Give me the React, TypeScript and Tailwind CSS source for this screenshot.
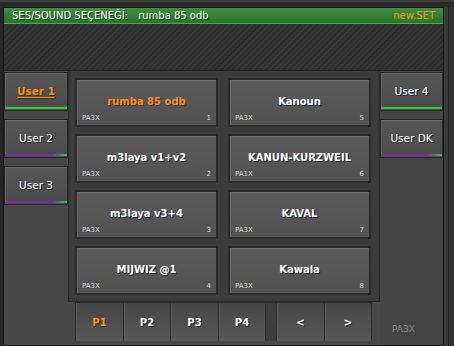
import React from "react";

const cards = [
  { name: "rumba 85 odb", tag: "PA3X", n: 1, active: true },
  { name: "m3laya v1+v2", tag: "PA3X", n: 2 },
  { name: "m3laya v3+4", tag: "PA3X", n: 3 },
  { name: "MIJWIZ @1", tag: "PA3X", n: 4 },
  { name: "Kanoun", tag: "PA3X", n: 5 },
  { name: "KANUN-KURZWEIL", tag: "PA1X", n: 6 },
  { name: "KAVAL", tag: "PA3X", n: 7 },
  { name: "Kawala", tag: "PA3X", n: 8 },
];

function UserBtn({ label, active, green }: { label: string; active?: boolean; green?: boolean }) {
  return (
    <div className="relative h-[39px] flex items-center justify-center border border-[#262626] bg-[linear-gradient(to_bottom,#575757,#4a4a4a)] shadow-[inset_1px_1px_0_#666]">
      <span
        className={
          active
            ? "text-[10.5px] font-bold text-[#f7941d] underline underline-offset-2 [text-shadow:1px_1px_0_#3a2a10]"
            : "text-[10.5px] text-white [text-shadow:1px_1px_0_#1c2436]"
        }
      >
        {label}
      </span>
      <div
        className={
          green
            ? "absolute left-0 right-0 bottom-[1px] h-[2px] bg-[#2fd02f]"
            : "absolute left-0 right-0 bottom-[1px] h-[2px] bg-[linear-gradient(to_right,#7a2ea8,#7a2ea8_75%,#2fd02f)]"
        }
      />
    </div>
  );
}

function Tab({ label, active, w }: { label: string; active?: boolean; w: string }) {
  return (
    <div
      className={`${w} h-full flex items-center justify-center border-r border-[#2c2c2c] bg-[linear-gradient(to_bottom,#474747,#565656)] shadow-[inset_1px_0_0_#5e5e5e]`}
    >
      <span
        className={
          active
            ? "text-[10px] font-bold text-[#f7941d] [text-shadow:1px_1px_0_#2a2a40]"
            : "text-[10px] font-bold text-white [text-shadow:1px_1px_0_#1c2436]"
        }
      >
        {label}
      </span>
    </div>
  );
}

export default function App() {
  return (
    <div className="w-[454px] h-[346px] bg-[#2d2d2d] overflow-hidden flex flex-col font-['DejaVu_Sans',sans-serif]">
      <div className="h-[7px] bg-[#2a2a2a] border-t-[2px] border-[#3c3c3c]" />
      <div className="flex flex-1">
        <div className="w-[3px] bg-[#262626]" />
        <div className="w-[441px] h-[339px] border border-[#161616] flex flex-col bg-[#474747]">
          {/* header */}
          <div className="h-[16px] flex items-center px-[8px] bg-[linear-gradient(to_bottom,#3f8e3f,#2b742b)] border-b border-[#46b046] text-[10px] text-white">
            <span className="[text-shadow:1px_1px_0_#1a3a1a]">SES/SOUND SEÇENEĞİ:</span>
            <span className="ml-[10px] [text-shadow:1px_1px_0_#1a3a1a]">rumba 85 odb</span>
            <span className="ml-auto text-[#f7941d]">new.SET</span>
          </div>
          {/* hatch */}
          <div className="h-[47px] bg-[repeating-linear-gradient(-45deg,#2d2d2d_0px,#2d2d2d_2px,#363636_2px,#363636_4px)] border-b border-[#222]" />
          {/* body */}
          <div className="flex flex-1">
            {/* left col */}
            <div className="w-[64px] flex flex-col gap-[8px] pt-[1px] bg-[#474747]">
              <UserBtn label="User 1" active green />
              <UserBtn label="User 2" />
              <UserBtn label="User 3" />
            </div>
            {/* center */}
            <div className="w-[312px] flex flex-col">
              <div className="h-[231px] bg-[#3c3c3c] border-l border-r border-b border-[#2a2a2a] pl-[6px] pt-[7px]">
                <div className="grid grid-cols-[143px_143px] grid-rows-[49px_49px_49px_49px] grid-flow-col gap-x-[10px] gap-y-[7px]">
                  {cards.map((c) => (
                    <div
                      key={c.n}
                      className="relative border-2 border-[#2b2b2b] bg-[linear-gradient(to_bottom,#5c5c5c,#515151)] shadow-[inset_1px_1px_0_#6a6a6a] flex flex-col"
                    >
                      <div className="flex-1 flex items-center justify-center pt-[9px]">
                        <span
                          className={
                            c.active
                              ? "text-[10px] font-bold text-[#f7941d] [text-shadow:1px_1px_0_#3a3040]"
                              : "text-[10px] font-bold text-white [text-shadow:1px_1px_0_#1c2436]"
                          }
                        >
                          {c.name}
                        </span>
                      </div>
                      <div className="h-[12px] flex items-start justify-between px-[5px] text-[7px] text-[#dcdcdc]">
                        <span>{c.tag}</span>
                        <span>{c.n}</span>
                      </div>
                    </div>
                  ))}
                </div>
              </div>
              <div className="flex-1 flex pl-[7px] bg-[#474747]">
                <div className="flex h-[39px] border-l border-[#2c2c2c] border-t">
                  <Tab label="P1" active w="w-[48px]" />
                  <Tab label="P2" w="w-[47px]" />
                  <Tab label="P3" w="w-[48px]" />
                  <Tab label="P4" w="w-[47px]" />
                </div>
                <div className="w-[10px] h-[39px] bg-[#3e3e3e] border-t border-[#2c2c2c]" />
                <div className="flex h-[39px] border-l border-[#2c2c2c] border-t">
                  <Tab label="<" w="w-[48px]" />
                  <Tab label=">" w="w-[47px]" />
                </div>
              </div>
            </div>
            {/* right col */}
            <div className="w-[63px] flex flex-col gap-[8px] pt-[1px] bg-[#444]">
              <UserBtn label="User 4" green />
              <UserBtn label="User DK" />
              <div className="mt-auto pl-[12px] pb-[9px] text-[9px] text-[#8a8a8a]">PA3X</div>
            </div>
          </div>
        </div>
        <div className="w-[10px] bg-[#333] flex">
          <div className="w-[4px] bg-[#3a3a3a]" />
          <div className="w-[1px] bg-[#1e1e1e]" />
        </div>
      </div>
    </div>
  );
}
